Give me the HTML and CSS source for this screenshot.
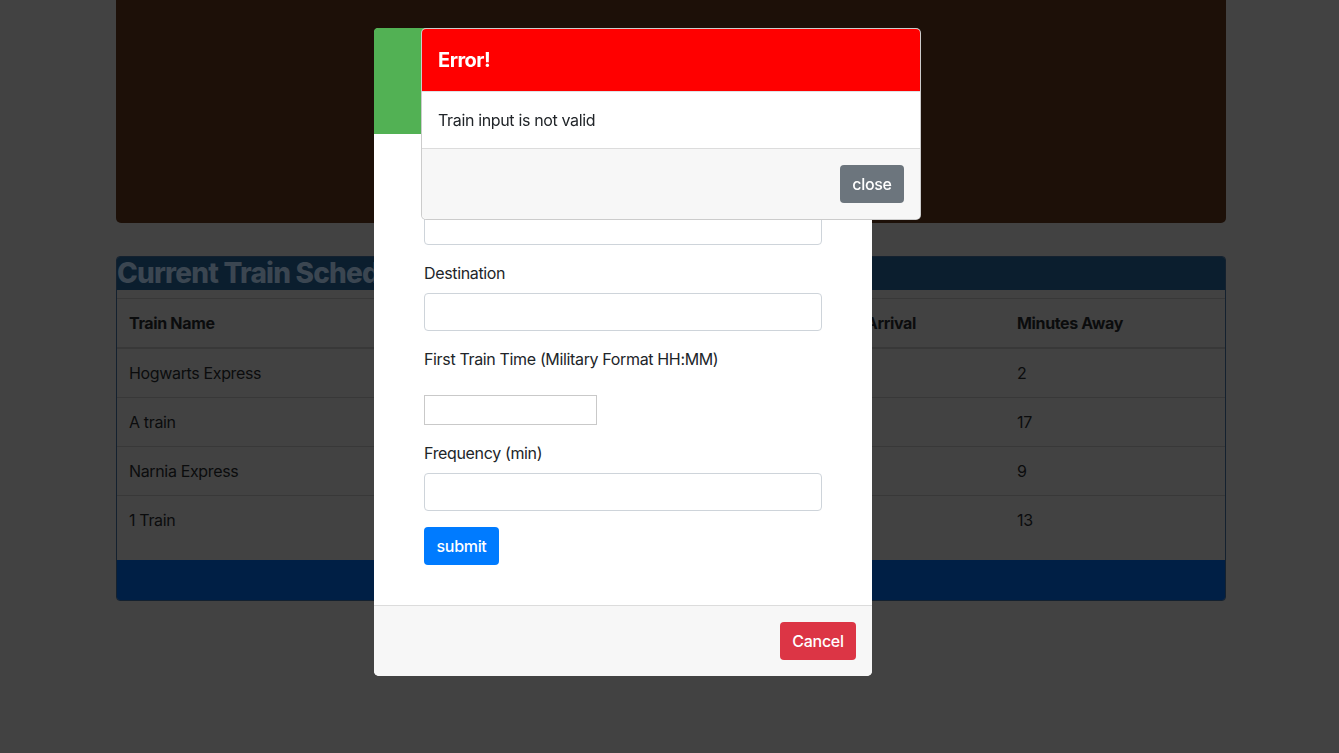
FILE: index.html
```html
<!DOCTYPE html>
<html lang="en">
<head>
<meta charset="utf-8">
<title>Train Scheduler</title>
<link rel="stylesheet" href="styles.css">
</head>
<body>
<div class="page">
  <div class="jumbotron"></div>
  <div class="card">
    <div class="card-header"><h2 class="card-title">Current Train Schedule</h2></div>
    <div class="card-body">
      <table class="schedule">
        <thead>
          <tr><th class="c1">Train Name</th><th class="c2">Destination</th><th class="c3">Frequency (min)</th><th class="c4">Next Arrival</th><th class="c5">Minutes Away</th></tr>
        </thead>
        <tbody>
          <tr><td>Hogwarts Express</td><td>Hogwarts</td><td>30</td><td>10:32</td><td>2</td></tr>
          <tr><td>A train</td><td>Harlem</td><td>20</td><td>10:47</td><td>17</td></tr>
          <tr><td>Narnia Express</td><td>Narnia</td><td>15</td><td>10:39</td><td>9</td></tr>
          <tr><td>1 Train</td><td>South Ferry</td><td>14</td><td>10:43</td><td>13</td></tr>
        </tbody>
      </table>
    </div>
    <div class="card-footer"></div>
  </div>
</div>

<div class="modal add-modal">
  <div class="modal-header green"></div>
  <div class="modal-body form-body">
    <div class="form-group">
      <label class="label">Train Name</label>
      <input class="form-control" type="text">
    </div>
    <div class="form-group">
      <label class="label">Destination</label>
      <input class="form-control" type="text">
    </div>
    <div class="form-group">
      <label class="label">First Train Time (Military Format HH:MM)</label>
      <div class="time-wrap"><input class="time-input" type="text"></div>
    </div>
    <div class="form-group">
      <label class="label">Frequency (min)</label>
      <input class="form-control" type="text">
    </div>
    <button class="btn btn-primary">submit</button>
  </div>
  <div class="modal-footer">
    <button class="btn btn-danger">Cancel</button>
  </div>
</div>

<div class="modal error-modal">
  <div class="modal-header red"><h5 class="modal-title">Error!</h5></div>
  <div class="modal-body">Train input is not valid</div>
  <div class="modal-footer">
    <button class="btn btn-secondary">close</button>
  </div>
</div>
</body>
</html>
```
FILE: styles.css
```css
* { box-sizing: border-box; }
html, body { margin: 0; padding: 0; }
body {
  background: #424242;
  font-family: Inter, "Noto Sans", "Liberation Sans", sans-serif;
  font-size: 16px;
  line-height: 1.5;
  letter-spacing: -0.35px;
  color: #0b0c0d;
  height: 753px;
  overflow: hidden;
}
.page {
  width: 1110px;
  margin-left: 116px;
  display: flex;
  flex-direction: column;
  gap: 33px;
}
.jumbotron {
  height: 223px;
  background: #1d1008;
  border-radius: 0 0 5px 5px;
}
.card {
  border: 1px solid #14212f;
  border-radius: 4px;
  display: flex;
  flex-direction: column;
}
.card-header {
  background: #0b1e2e;
  height: 33px;
  border-radius: 3px 3px 0 0;
}
.card-title {
  margin: 0;
  font-size: 28px;
  line-height: 33px;
  font-weight: 800;
  color: #3b4651;
  letter-spacing: -0.8px;
}
.card-body { padding: 8px 0 16px; }
.schedule {
  width: 100%;
  border-collapse: collapse;
  table-layout: fixed;
}
.schedule th, .schedule td {
  text-align: left;
  padding: 12px;
  border-top: 1px solid #383838;
  line-height: 24px;
}
.schedule th { font-weight: 700; border-bottom: 2px solid #383838; }
.c1 { width: 283px; }
.c2 { width: 220px; }
.c3 { width: 195px; }
.c4 { width: 190px; }
.c5 { width: 220px; }
.card-footer {
  height: 40px;
  background: #001f45;
  border-radius: 0 0 3px 3px;
}

.modal {
  position: fixed;
  top: 28px;
  width: 498px;
  background: #fff;
  border-radius: 5px;
  color: #212529;
  display: flex;
  flex-direction: column;
}
.add-modal { left: 374px; height: 648px; }
.error-modal {
  left: 421px;
  width: 500px;
  border: 1px solid rgba(0,0,0,0.2);
}
.modal-header {
  border-radius: 4px 4px 0 0;
}
.modal-header.green { background: #52b154; height: 106px; }
.modal-header.red { background: #ff0000; padding: 16px; border-bottom: 1px solid #dee2e6; }
.modal-title {
  margin: 0;
  font-size: 20px;
  line-height: 30px;
  font-weight: 700;
  letter-spacing: -0.5px;
  color: #fff;
}
.modal-body { padding: 16px; }
.form-body { padding: 41px 50px 40px; flex: 1; }
.form-group { display: flex; flex-direction: column; align-items: flex-start; margin-bottom: 16px; }
.label { display: block; margin-bottom: 8px; line-height: 24px; }
.form-control {
  width: 100%;
  height: 38px;
  border: 1px solid #ced4da;
  border-radius: 4px;
  font: inherit;
  padding: 6px 12px;
}
.time-wrap { padding-top: 16px; }
.time-input {
  width: 173px;
  height: 30px;
  border: 1px solid #c9c9c9;
  border-radius: 0;
  font: inherit;
  display: block;
}
.modal-footer {
  background: #f7f7f7;
  border-top: 1px solid #dcdcdc;
  padding: 16px;
  display: flex;
  justify-content: flex-end;
  border-radius: 0 0 5px 5px;
}
.btn {
  font-family: inherit;
  font-size: 16px;
  font-weight: 500;
  letter-spacing: -0.3px;
  line-height: 24px;
  height: 38px;
  padding: 6px 12px;
  border: none;
  border-radius: 4px;
  color: #fff;
  cursor: pointer;
}
.btn-primary { background: #007bff; width: 75px; }
.btn-danger { background: #dc3545; width: 76px; }
.btn-secondary { background: #6c757d; width: 64px; }
```
